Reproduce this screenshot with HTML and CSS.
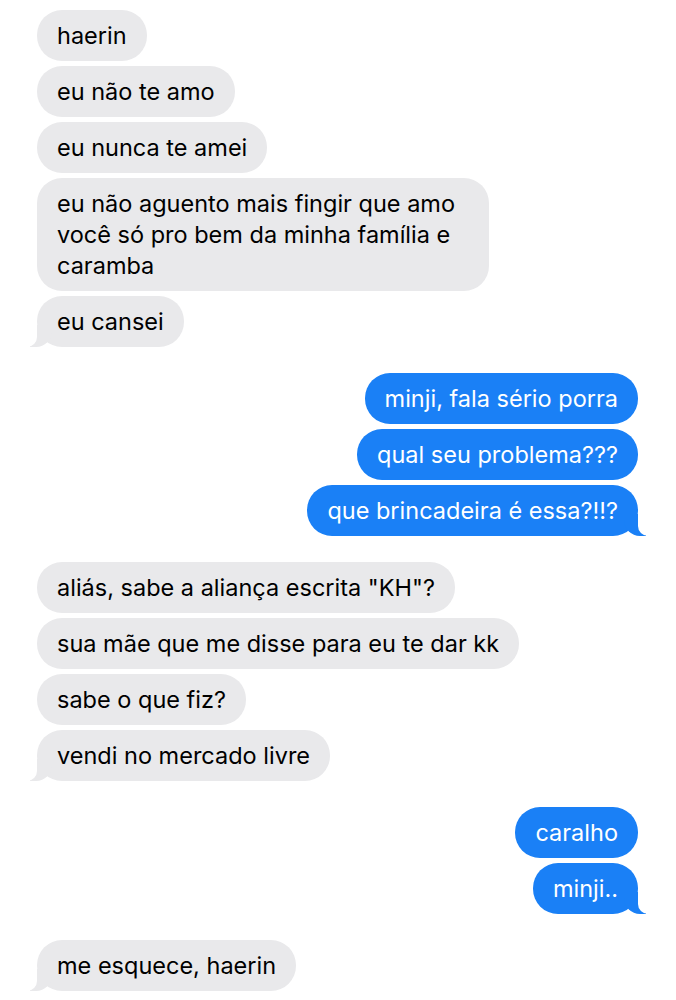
FILE: index.html
```html
<!DOCTYPE html>
<html lang="pt-BR">
<head>
    <meta charset="UTF-8">
    <meta name="viewport" content="width=device-width, initial-scale=1.0">
    <title>Mensagens</title>
    <link rel="stylesheet" href="styles.css">
</head>
<body>
    <div class="chat">
        <div class="group received">
            <div class="msg">haerin</div>
            <div class="msg">eu não te amo</div>
            <div class="msg">eu nunca te amei</div>
            <div class="msg long">eu não aguento mais fingir que amo você só pro bem da minha família e caramba</div>
            <div class="msg tail">eu cansei</div>
        </div>

        <div class="group sent">
            <div class="msg">minji, fala sério porra</div>
            <div class="msg">qual seu problema???</div>
            <div class="msg tail">que brincadeira é essa?!!?</div>
        </div>

        <div class="group received">
            <div class="msg">aliás, sabe a aliança escrita "KH"?</div>
            <div class="msg">sua mãe que me disse para eu te dar kk</div>
            <div class="msg">sabe o que fiz?</div>
            <div class="msg tail">vendi no mercado livre</div>
        </div>

        <div class="group sent">
            <div class="msg">caralho</div>
            <div class="msg tail">minji..</div>
        </div>

        <div class="group received">
            <div class="msg tail">me esquece, haerin</div>
        </div>
    </div>
</body>
</html>
```

FILE: styles.css
```css
body {
    margin: 0;
    background-color: #fff;
    font-family: Inter, "Liberation Sans", sans-serif;
}

.chat {
    display: flex;
    flex-direction: column;
    gap: 26px;
    padding: 10px 38px 10px 37px;
}

.group {
    display: flex;
    flex-direction: column;
    gap: 5px;
}

.received {
    align-items: flex-start;
}

.sent {
    align-items: flex-end;
}

.msg {
    position: relative;
    max-width: 492px;
    padding: 10px 20px;
    border-radius: 25px;
    font-size: 23.5px;
    line-height: 31px;
    box-sizing: border-box;
}

.msg.long {
    max-width: 452px;
}

.received .msg {
    background-color: #e9e9eb;
    color: #000;
}

.sent .msg {
    background-color: #1a80f6;
    color: #fff;
}

/* little bubble tail on the last message of a group */
.msg.tail::before,
.msg.tail::after {
    content: "";
    position: absolute;
    bottom: 0;
    height: 22px;
}

.received .msg.tail::before {
    left: -7px;
    width: 22px;
    background-color: #e9e9eb;
    border-bottom-right-radius: 16px;
}

.received .msg.tail::after {
    left: -10px;
    width: 10px;
    background-color: #fff;
    border-bottom-right-radius: 10px;
}

.sent .msg.tail::before {
    right: -8px;
    width: 22px;
    background-color: #1a80f6;
    border-bottom-left-radius: 16px;
}

.sent .msg.tail::after {
    right: -10px;
    width: 10px;
    background-color: #fff;
    border-bottom-left-radius: 10px;
}
```
